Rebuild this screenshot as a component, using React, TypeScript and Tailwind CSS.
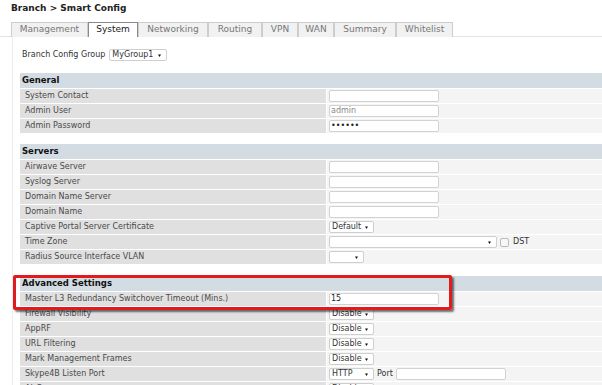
import React from 'react';

const tabs = [
  { name: 'Management', w: 'w-[77px]' },
  { name: 'System', w: 'w-[50px]', active: true },
  { name: 'Networking', w: 'w-[70px]' },
  { name: 'Routing', w: 'w-[54px]' },
  { name: 'VPN', w: 'w-[36px]' },
  { name: 'WAN', w: 'w-[36px]' },
  { name: 'Summary', w: 'w-[62px]' },
  { name: 'Whitelist', w: 'w-[57px]' },
];

function Arrow() {
  return (
    <svg width="3" height="3" viewBox="0 0 3 3" className="shrink-0">
      <path d="M0 0.5h3L1.5 3z" fill="#111" />
    </svg>
  );
}

function Select({ value, w }: { value: string; w: string }) {
  return (
    <div className={`${w} h-[12px] bg-white border border-[#cfcfcf] rounded-[2px] flex items-center justify-between pl-[2px] pr-[5px] text-[8px] text-[#333] leading-none`}>
      <span>{value}</span>
      <Arrow />
    </div>
  );
}

function Input({ value, muted }: { value?: string; muted?: boolean }) {
  return (
    <div className={`w-[110px] h-[12px] bg-white border border-[#d2d2d2] rounded-[2px] flex items-center pl-[1px] text-[8px] leading-none ${muted ? 'text-[#888]' : 'text-[#222]'}`}>
      {value}
    </div>
  );
}

type Row = { label: string; control: React.ReactNode };

function Section({ title, rows, highlight }: { title: string; rows: Row[]; highlight?: boolean }) {
  return (
    <div className="relative flex flex-col gap-px">
      <div className="h-[15px] bg-[#d3dbe3] pl-[2px] flex items-center font-bold text-[8.5px] text-[#111]">{title}</div>
      {rows.map((r) => (
        <div key={r.label} className="flex h-[14px] gap-px">
          <div className="w-[306px] shrink-0 bg-[#e0e0e0] pl-[5px] flex items-center text-[8px] text-[#4a4a4a]">{r.label}</div>
          <div className="flex-1 bg-[#f4f4f4] pl-[2px] flex items-center gap-[3px]">{r.control}</div>
        </div>
      ))}
      {/* red callout drawn over the first rows */}
      {highlight && (
        <div className="absolute -left-[7px] top-[-1px] w-[439px] h-[35px] border-[3px] border-[#e01b1b] rounded-[2px] shadow-[2px_2px_2px_rgba(0,0,0,0.55)]" />
      )}
    </div>
  );
}

export default function App() {
  const general: Row[] = [
    { label: 'System Contact', control: <Input /> },
    { label: 'Admin User', control: <Input value="admin" muted /> },
    { label: 'Admin Password', control: <Input value="••••••" /> },
  ];
  const servers: Row[] = [
    { label: 'Airwave Server', control: <Input /> },
    { label: 'Syslog Server', control: <Input /> },
    { label: 'Domain Name Server', control: <Input /> },
    { label: 'Domain Name', control: <Input /> },
    { label: 'Captive Portal Server Certificate', control: <Select value="Default" w="w-[45px]" /> },
    {
      label: 'Time Zone',
      control: (
        <>
          <Select value="" w="w-[168px]" />
          <div className="w-[9px] h-[9px] bg-[#f7f7f7] border border-[#bbb] rounded-[2px]" />
          <span className="ml-[1px] text-[8px] text-[#333]">DST</span>
        </>
      ),
    },
    { label: 'Radius Source Interface VLAN', control: <Select value="" w="w-[35px]" /> },
  ];
  const advanced: Row[] = [
    { label: 'Master L3 Redundancy Switchover Timeout (Mins.)', control: <Input value="15" /> },
    { label: 'Firewall Visibility', control: <Select value="Disable" w="w-[45px]" /> },
    { label: 'AppRF', control: <Select value="Disable" w="w-[45px]" /> },
    { label: 'URL Filtering', control: <Select value="Disable" w="w-[45px]" /> },
    { label: 'Mark Management Frames', control: <Select value="Disable" w="w-[45px]" /> },
    {
      label: 'Skype4B Listen Port',
      control: (
        <>
          <Select value="HTTP" w="w-[45px]" />
          <span className="text-[8px] text-[#333]">Port</span>
          <Input />
        </>
      ),
    },
    { label: 'AirGroup', control: <Select value="Disable" w="w-[45px]" /> },
  ];

  return (
    <div className="w-[602px] h-[385px] overflow-hidden bg-white font-['DejaVu_Sans',Verdana,sans-serif]">
      <div className="h-[22px] pl-[11px] pt-[2px] font-bold text-[9px] text-[#222]">Branch &gt; Smart Config</div>
      <div className="flex pl-[11px] h-[15px] border-b border-[#e3e3e3]">
        {tabs.map((t) => (
          <div
            key={t.name}
            className={`${t.w} h-[15px] flex items-center justify-center text-[9px] border-t border-l border-r ${
              t.active ? 'bg-white border-[#8a8a8a] text-[#222]' : 'bg-[#f1f1f1] border-[#cdcdcd] text-[#777]'
            }`}
          >
            {t.name}
          </div>
        ))}
      </div>
      <div className="ml-[12px] border-l border-[#ececec] pl-[7px] h-[348px]">
        <div className="h-[36px] flex items-center pl-[2px] gap-[4px]">
          <span className="text-[8px] text-[#333]">Branch Config Group</span>
          <Select value="MyGroup1" w="w-[58px]" />
        </div>
        <div className="flex flex-col">
          <Section title="General" rows={general} />
          <div className="mt-[11px]">
            <Section title="Servers" rows={servers} />
          </div>
          <div className="mt-[12px]">
            <Section title="Advanced Settings" rows={advanced} highlight />
          </div>
        </div>
      </div>
    </div>
  );
}
